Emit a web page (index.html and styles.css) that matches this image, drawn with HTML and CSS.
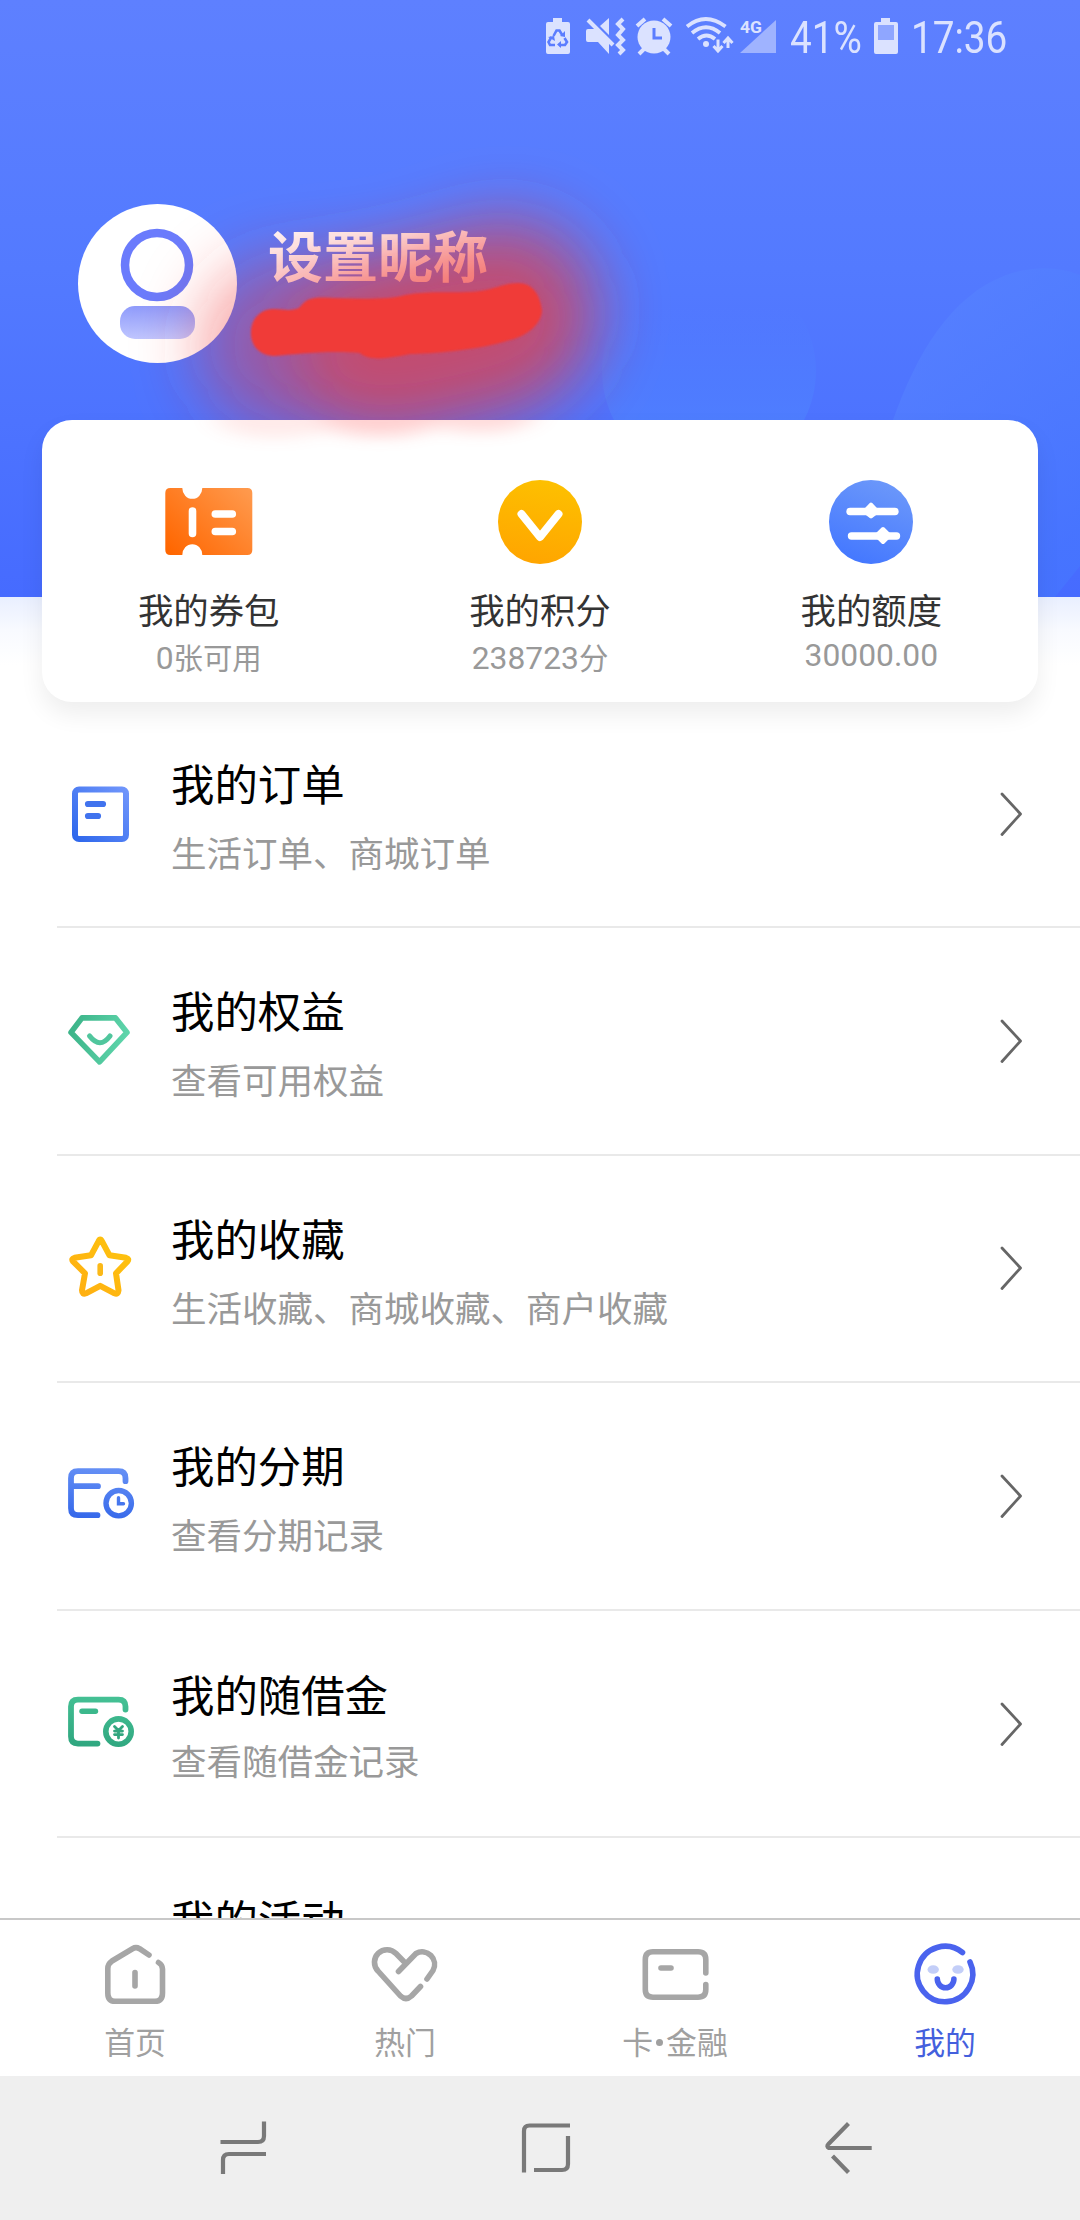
FILE: index.html
```html
<!DOCTYPE html>
<html lang="zh-CN">
<head>
<meta charset="utf-8">
<title>我的</title>
<link rel="stylesheet" href="styles.css">
</head>
<body>
<div class="screen">
  <header class="header">
    <svg class="header-art" viewBox="0 0 1080 597" width="1080" height="597">
      <defs>
        <linearGradient id="bubble" x1="0" y1="0" x2="0" y2="1"><stop offset="0.2" stop-color="#4f82ff" stop-opacity="0"/><stop offset="0.75" stop-color="#4f82ff" stop-opacity=".7"/></linearGradient>
        <linearGradient id="leaf" x1="0" y1="0" x2=".7" y2="1"><stop offset="0" stop-color="#5c86ff" stop-opacity=".65"/><stop offset="1" stop-color="#4678ff" stop-opacity=".6"/></linearGradient>
      </defs>
      <circle cx="709" cy="371" r="107" fill="url(#bubble)"/>
      <path d="M1080 275C1058 266 1032 266 1006 275C950 296 916 355 893 420L860 597H1055L1080 566Z" fill="url(#leaf)"/>
    </svg>
    <div class="status">
      <svg viewBox="540 10 240 50" width="240" height="50" fill="#dbe2ff">
        <path d="M553 18h9v4h6q2 0 2 2v28q0 2-2 2h-20q-2 0-2-2V24q0-2 2-2h5z"/>
        <g fill="none" stroke="#5b7dff" stroke-width="2.6"><path d="M553.5 36l3-5.500h3l3 5M564.500 38l2.500 4-2 3h-6M555 45h-5l-1.500-3 3-5"/></g>
        <path d="M560 36l5 1 0-6zM561 41v7l-4-3.500zM548 37l6-1 1 5z" fill="#5b7dff"/>
        <path d="M588 29h8l13 12v13l-11-12h-10q-2 0-2-2v-9q0-2 2-2zM600 26l9-8v17z"/>
        <path d="M588 20l25 25" stroke="#dbe2ff" stroke-width="4"/>
        <path d="M623 19l-5 5 5 5-5 6 5 5-5 5 5 5-4 4" fill="none" stroke="#dbe2ff" stroke-width="4"/>
        <circle cx="654" cy="37" r="16.500"/><path d="M637 26l8-7M671 26l-8-7M644 49l-5 5M664 49l5 5" stroke="#dbe2ff" stroke-width="4"/>
        <path d="M654 28v10h8" fill="none" stroke="#5b7dff" stroke-width="3"/>
        <g fill="none" stroke="#dbe2ff" stroke-width="3.800"><path d="M687 26.500q18.500-15 38.500 0M692 33q14-11.500 28 0M698 39q8.500-7 17 0"/><path d="M718 39.500v11M713.500 46l4.500 5 4.500-5M728 48V38M723.500 43l4.500-5 4.500 5" stroke-width="3"/></g>
        <circle cx="706" cy="44" r="3"/>
        <path d="M740 53L776 20V53z" fill="#9fb3ff"/>
        <text x="740" y="33" class="net" textLength="22" lengthAdjust="spacingAndGlyphs">4G</text>
      </svg>
      <span class="status-text status-pct">41%</span>
      <svg viewBox="874 18 24 36" width="24" height="36"><path d="M881 18h9v4h6q2 0 2 2v28q0 2-2 2h-20q-2 0-2-2V24q0-2 2-2h5z" fill="#dbe2ff"/><path d="M878 25h16v15h-16z" fill="#8fa6ff"/></svg>
      <span class="status-text status-time">17:36</span>
    </div>
    <div class="profile">
      <div class="avatar">
        <svg viewBox="78 204 159 159" width="159" height="159">
          <defs><linearGradient id="body" x1="0" y1="0" x2="0" y2="1"><stop offset="0" stop-color="#8f9bfb"/><stop offset="1" stop-color="#bfc6ff"/></linearGradient></defs>
          <circle cx="157" cy="265" r="32" fill="none" stroke="#6a7bfc" stroke-width="8.500"/>
          <rect x="120" y="306" width="75" height="33" rx="15" fill="url(#body)"/>
        </svg>
      </div>
      <div class="nickname">设置昵称</div>
    </div>
  </header>

  <section class="card">
    <div class="stat">
      <svg viewBox="166.700 480 84 84" width="84" height="84" overflow="visible">
        <defs><linearGradient id="orange" x1="0" y1=".9" x2="1" y2=".1"><stop offset="0" stop-color="#ff6600"/><stop offset="1" stop-color="#ff994c"/></linearGradient></defs>
        <path d="M170 488H182A9.700 10.500 0 0 0 202 488H247Q252 488 252 493V550Q252 555 247 555H202A9.700 10.500 0 0 0 182 555H170Q165 555 165 550V493Q165 488 170 488Z" fill="url(#orange)"/>
        <path d="M192.200 511v22.500M215 514h17M215 531.500h17" stroke="#fff" stroke-width="7.600" stroke-linecap="round"/>
      </svg>
      <div class="stat-label">我的券包</div>
      <div class="stat-value">0<span class="unit">张可用</span></div>
    </div>
    <div class="stat">
      <svg viewBox="498 480 84 84" width="84" height="84">
        <defs><linearGradient id="gold" x1=".6" y1="0" x2=".4" y2="1"><stop offset="0" stop-color="#fdc000"/><stop offset="1" stop-color="#ffa500"/></linearGradient></defs>
        <circle cx="540" cy="522" r="42" fill="url(#gold)"/>
        <path d="M521.500 514L540 537L558.500 514" fill="none" stroke="#fff" stroke-width="8" stroke-linecap="round" stroke-linejoin="round"/>
      </svg>
      <div class="stat-label">我的积分</div>
      <div class="stat-value">238723<span class="unit">分</span></div>
    </div>
    <div class="stat">
      <svg viewBox="828 480 84 84" width="84" height="84">
        <defs><linearGradient id="sky" x1=".7" y1="0" x2=".3" y2="1"><stop offset="0" stop-color="#6c98fa"/><stop offset="1" stop-color="#4377ff"/></linearGradient></defs>
        <circle cx="870" cy="522" r="42" fill="url(#sky)"/>
        <path d="M849 511.500h45M850.500 536h45" stroke="#fff" stroke-width="7.400" stroke-linecap="round"/>
        <path d="M870 504.500l6.500 7-6.500 5-6.500-5zM882 529l6.500 6.500-6.500 6.500-6.500-6.500z" fill="#fff" stroke="#fff" stroke-width="4" stroke-linejoin="round"/>
      </svg>
      <div class="stat-label">我的额度</div>
      <div class="stat-value stat-value-latin">30000.00</div>
    </div>
  </section>

  <main class="list">
    <div class="row">
      <svg class="row-icon" viewBox="60 774 80 80">
        <defs><linearGradient id="blue" x1="0" y1="1" x2="1" y2="0"><stop offset="0" stop-color="#2f68ec"/><stop offset="1" stop-color="#6f95fb"/></linearGradient></defs>
        <rect x="75" y="789.500" width="51" height="49.500" rx="4" fill="none" stroke="url(#blue)" stroke-width="6"/>
        <path d="M88 804h15M88 816h10" stroke="#4173ee" stroke-width="6.200" stroke-linecap="round"/>
      </svg>
      <div class="row-text"><div class="row-title">我的订单</div><div class="row-sub">生活订单、商城订单</div></div>
      <svg class="chevron" viewBox="990 788 40 50"><path d="M1000 793L1018.500 813L1000 833.500"/></svg>
    </div>
    <div class="row">
      <svg class="row-icon" viewBox="60 1001.600 80 80">
        <defs><linearGradient id="green" x1="0" y1=".4" x2="1" y2=".6"><stop offset="0" stop-color="#3db58a"/><stop offset="1" stop-color="#5fd6ac"/></linearGradient></defs>
        <path d="M82 1018.500H115.500L127 1033L99.500 1062.500L71 1033Z" fill="none" stroke="url(#green)" stroke-width="5.600" stroke-linejoin="round"/>
        <path d="M89.500 1036.500Q100 1050 110 1036.500" fill="none" stroke="#50c69d" stroke-width="5" stroke-linecap="round"/>
      </svg>
      <div class="row-text"><div class="row-title">我的权益</div><div class="row-sub">查看可用权益</div></div>
      <svg class="chevron" viewBox="990 788 40 50"><path d="M1000 793L1018.500 813L1000 833.500"/></svg>
    </div>
    <div class="row">
      <svg class="row-icon" viewBox="60 1228.200 80 80">
        <defs><linearGradient id="amber" x1="0" y1="1" x2="1" y2="0"><stop offset="0" stop-color="#ffae12"/><stop offset="1" stop-color="#fdc40e"/></linearGradient></defs>
        <path d="M98.500 1241.500Q100.200 1238 102 1241.500L109.500 1255.500L126 1258Q129.500 1259 127.500 1261.500L116 1273.500L118.500 1290.500Q118 1295 114.500 1293.500L100.200 1286L86 1293.500Q82 1295 82 1290.500L85 1273.500L73 1261.500Q71 1259 74.500 1258L91 1255.500Z" fill="none" stroke="url(#amber)" stroke-width="6" stroke-linejoin="round"/>
        <path d="M100.200 1266v7.500" stroke="#fbb918" stroke-width="5.600" stroke-linecap="round"/>
      </svg>
      <div class="row-text"><div class="row-title">我的收藏</div><div class="row-sub">生活收藏、商城收藏、商户收藏</div></div>
      <svg class="chevron" viewBox="990 788 40 50"><path d="M1000 793L1018.500 813L1000 833.500"/></svg>
    </div>
    <div class="row">
      <svg class="row-icon" viewBox="60 1456.800 80 80" fill="none" stroke="url(#blue2)" stroke-linecap="round">
        <defs><linearGradient id="blue2" gradientUnits="userSpaceOnUse" x1="100" y1="1470" x2="95" y2="1520"><stop offset="0" stop-color="#648ff5"/><stop offset="1" stop-color="#3568ea"/></linearGradient></defs>
        <path d="M125.500 1482V1479Q125.500 1472 118.500 1472H78Q71 1472 71 1479V1509Q71 1516 78 1516H97.500M72 1487H98" stroke-width="5.800"/>
        <circle cx="118.700" cy="1504" r="12.700" stroke-width="5.400"/>
        <path d="M118.500 1498.500V1504.500H123.500" stroke-width="3.400"/>
      </svg>
      <div class="row-text"><div class="row-title">我的分期</div><div class="row-sub">查看分期记录</div></div>
      <svg class="chevron" viewBox="990 788 40 50"><path d="M1000 793L1018.500 813L1000 833.500"/></svg>
    </div>
    <div class="row row-tight">
      <svg class="row-icon" viewBox="60 1684.400 80 80" fill="none" stroke="url(#green2)" stroke-linecap="round">
        <defs><linearGradient id="green2" gradientUnits="userSpaceOnUse" x1="100" y1="1698" x2="95" y2="1748"><stop offset="0" stop-color="#44c094"/><stop offset="1" stop-color="#2fa67f"/></linearGradient></defs>
        <path d="M125.500 1710V1707Q125.500 1700 118.500 1700H78Q71 1700 71 1707V1737Q71 1744 78 1744H97.500" stroke-width="5.800"/>
        <path d="M82 1711.600H95.500" stroke="#3cb88c" stroke-width="5.400"/>
        <circle cx="118.500" cy="1732" r="12.700" stroke-width="5.600"/>
        <path d="M114.500 1727L118.500 1731L122.500 1727M118.500 1731V1738.500M114.500 1731.500H122.500M114.500 1735H122.500" stroke="#32a67f" stroke-width="2.800"/>
      </svg>
      <div class="row-text"><div class="row-title">我的随借金</div><div class="row-sub">查看随借金记录</div></div>
      <svg class="chevron" viewBox="990 788 40 50"><path d="M1000 793L1018.500 813L1000 833.500"/></svg>
    </div>
    <div class="row row-last">
      <div class="row-icon"></div>
      <div class="row-text"><div class="row-title">我的活动</div></div>
    </div>
  </main>

  <nav class="tabs">
    <div class="tab">
      <svg viewBox="95 1936 80 76"><path d="M149 1955L139.500 1948.700Q136 1946.700 132.500 1948.700L112 1961Q107.800 1964 107.800 1968.500V1993Q107.800 2001.300 115 2001.300H155Q162.500 2001.300 162.500 1993V1969Q162.500 1965 158.500 1962.500M135 1972.500V1986"/></svg>
      <span>首页</span>
    </div>
    <div class="tab">
      <svg viewBox="364.500 1936 80 76"><path d="M398 1971.500L415.500 1953.500A12.500 12.500 0 0 1 432.500 1970.500L426.500 1979M403.800 1962L395.500 1953.500A12.500 12.500 0 0 0 377.500 1971L400 1996Q405.500 2001 411 1996L420 1986.500"/></svg>
      <span>热门</span>
    </div>
    <div class="tab">
      <svg viewBox="634.500 1936 80 76"><path d="M705.300 1973V1959.500Q705.300 1951.800 697.500 1951.800H652.500Q644.800 1951.800 644.800 1959.500V1989.500Q644.800 1997.200 652.500 1997.200H697.500Q705.300 1997.200 705.300 1989.500V1984.500M660.500 1968H670.500"/></svg>
      <span>卡<i class="dot"></i>金融</span>
    </div>
    <div class="tab tab-active">
      <svg viewBox="904.500 1936 80 76"><path d="M962 1952.500A27.700 27.700 0 1 0 969.500 1962M936.800 1979A8.300 8.800 0 0 0 953.400 1979"/><ellipse cx="932.700" cy="1969.500" rx="5.700" ry="4.300"/><ellipse cx="957.500" cy="1969.500" rx="5.700" ry="4.300"/></svg>
      <span>我的</span>
    </div>
  </nav>

  <footer class="system-nav">
    <svg viewBox="213 2118 60 60"><path d="M220.500 2142H258Q264 2142 264 2136V2121.500M266 2154H229Q223 2154 223 2160V2174"/></svg>
    <svg viewBox="515 2118 60 60"><path d="M523 2172.500V2131Q523 2125.500 528.500 2125.500H569M533 2170H561Q567 2170 567 2164V2136"/></svg>
    <svg viewBox="818 2118 60 60"><path d="M871.700 2148H829Q826 2146.500 828.500 2144L848.500 2123.500M832.500 2156L848.500 2172.500"/></svg>
  </footer>

  <svg class="marker" viewBox="0 0 1080 470" width="1080" height="470">
    <defs>
      <filter id="soft" filterUnits="userSpaceOnUse" x="0" y="0" width="1080" height="600"><feGaussianBlur stdDeviation="32"/></filter>
      <filter id="soft2" filterUnits="userSpaceOnUse" x="0" y="0" width="1080" height="600"><feGaussianBlur stdDeviation="14 8"/></filter>
      <filter id="edge"><feGaussianBlur stdDeviation="1"/></filter>
      <clipPath id="above"><rect width="1080" height="420"/></clipPath>
      <clipPath id="below"><rect y="420" width="1080" height="50"/></clipPath>
    </defs>
    <g clip-path="url(#above)"><g fill="none" stroke="#f03a38" stroke-linecap="round" filter="url(#soft)">
      <path d="M285 345L495 330" stroke-width="175" opacity=".42"/>
      <path d="M390 350L508 308" stroke-width="185" opacity=".5"/>
    </g></g>
    <g clip-path="url(#below)"><g fill="#ff4a48" opacity=".25" filter="url(#soft2)"><ellipse cx="275" cy="418" rx="60" ry="20" opacity=".45"/><ellipse cx="380" cy="416" rx="62" ry="20"/><ellipse cx="480" cy="414" rx="55" ry="18" opacity=".8"/></g></g>
    <path filter="url(#edge)" fill="#f03a38" d="M251 331C252 315 264 308 276 309C285 310 295 311 300 307C306 298 315 297 325 297.500C350 299 390 300 405 295C430 290 460 294 480 291C495 289 505 283 518 283C533 283 540 295 542 310C542 322 530 335 510 340C480 350 430 354 410 354C390 358 370 362 360 353C330 350 295 354 275 356C260 356 250 346 251 331Z"/>
  </svg>
</div>
</body>
</html>
```
FILE: styles.css
```css
* { box-sizing: border-box; }

body {
  margin: 0;
  background: #fff;
  font-family: Roboto, "Noto Sans CJK SC", sans-serif;
}

svg { display: block; flex: none; }

.screen {
  position: relative;
  width: 1080px;
  height: 2220px;
  display: flex;
  flex-direction: column;
  overflow: hidden;
  background: linear-gradient(#e9efff 597px, #f8faff 630px, #fff 665px);
}

/* header */
.header {
  position: relative;
  flex: none;
  height: 597px;
  background: linear-gradient(#5e80ff, #537aff 45%, #466bff);
}
.header-art { position: absolute; inset: 0; }

.status {
  position: relative;
  display: flex;
  align-items: center;
  height: 72px;
  padding-left: 540px;
}
.status > svg:first-child { margin-top: -2px; }
.status-text {
  color: #dbe2ff;
  font-size: 45px;
  line-height: 50px;
  white-space: nowrap;
  transform: scaleX(.86);
  transform-origin: left center;
}
.status-pct { width: 84px; margin: 3px 0 0 10px; }
.status-time { margin: 3px 0 0 13px; }
.net { font-size: 17px; font-weight: 700; }

.profile {
  position: relative;
  display: flex;
  padding: 132px 0 0 78px;
}
.avatar {
  width: 159px;
  height: 159px;
  border-radius: 50%;
  background: #fff;
}
.nickname {
  margin: 22px 0 0 31px;
  color: #fff;
  font-size: 55px;
  font-weight: 700;
  line-height: 64px;
}

/* summary card */
.card {
  position: relative;
  flex: none;
  display: grid;
  grid-template-columns: repeat(3, 1fr);
  height: 282px;
  margin: -177px 42px 0;
  padding: 60px 1px 0;
  border-radius: 30px;
  background: #fff;
  box-shadow: 0 12px 24px rgba(0, 0, 0, .07);
}
.stat { display: flex; flex-direction: column; align-items: center; }
.stat-label {
  margin-top: 27px;
  color: #333;
  font-size: 35.4px;
  line-height: 42px;
}
.stat-value {
  margin-top: 6px;
  color: #999;
  font-size: 31.8px;
  line-height: 38px;
}
.stat-value-latin { margin-top: 3px; }
.unit { font-size: 29.4px; }

/* menu */
.list {
  flex: none;
  display: grid;
  grid-template-rows: 226px;
  grid-auto-rows: 227.6px;
  height: 1216px;
  overflow: hidden;
}
.row {
  display: flex;
  align-items: center;
  margin-left: 57px;
  padding: 0 48px 0 3px;
  border-bottom: 2px solid #e9e9e9;
}
.row-icon { width: 80px; height: 80px; }
.row-text {
  flex: 1;
  align-self: flex-start;
  padding: 61px 0 0 31px;
}
.row:first-child .row-text { padding-top: 60px; }
.row-title { color: #000; font-size: 43.4px; line-height: 50px; }
.row-sub {
  margin-top: 22px;
  color: #999;
  font-size: 35.5px;
  line-height: 42px;
}
.row-tight .row-text { padding-top: 62px; }
.row-tight .row-sub { margin-top: 19px; }
.row-last .row-text { padding-top: 60px; }
.chevron {
  width: 40px;
  height: 50px;
  fill: none;
  stroke: #666;
  stroke-width: 2.8;
  stroke-linecap: round;
  stroke-linejoin: round;
}

/* tab bar */
.tabs {
  position: relative;
  flex: none;
  display: grid;
  grid-template-columns: repeat(4, 1fr);
  height: 158px;
  padding-top: 16px;
  border-top: 2px solid #c8c8c8;
  background: #fff;
}
.tab {
  display: flex;
  flex-direction: column;
  align-items: center;
  color: #a0a0a0;
  font-size: 30.8px;
  line-height: 36px;
}
.tab svg {
  width: 80px;
  height: 76px;
  margin-bottom: 14px;
  fill: none;
  stroke: #a6a6a6;
  stroke-width: 5.6;
  stroke-linecap: round;
  stroke-linejoin: round;
}
.tab-active { color: #4460dd; }
.tab-active svg { stroke: #4a63ee; }
.tab-active ellipse { fill: #c3cef8; stroke: none; }
.dot {
  display: inline-block;
  width: 7px;
  height: 7px;
  margin: 0 3px;
  border-radius: 50%;
  background: currentColor;
  vertical-align: 8px;
}

/* system navigation */
.system-nav {
  flex: none;
  display: flex;
  justify-content: space-between;
  height: 144px;
  padding: 42px 202px 0 213px;
  background: #efefef;
}
.system-nav svg {
  width: 60px;
  height: 60px;
  fill: none;
  stroke: #797979;
  stroke-width: 4.2;
}

/* hand-drawn redaction stroke over the account number */
.marker { position: absolute; left: 0; top: 0; }
```
